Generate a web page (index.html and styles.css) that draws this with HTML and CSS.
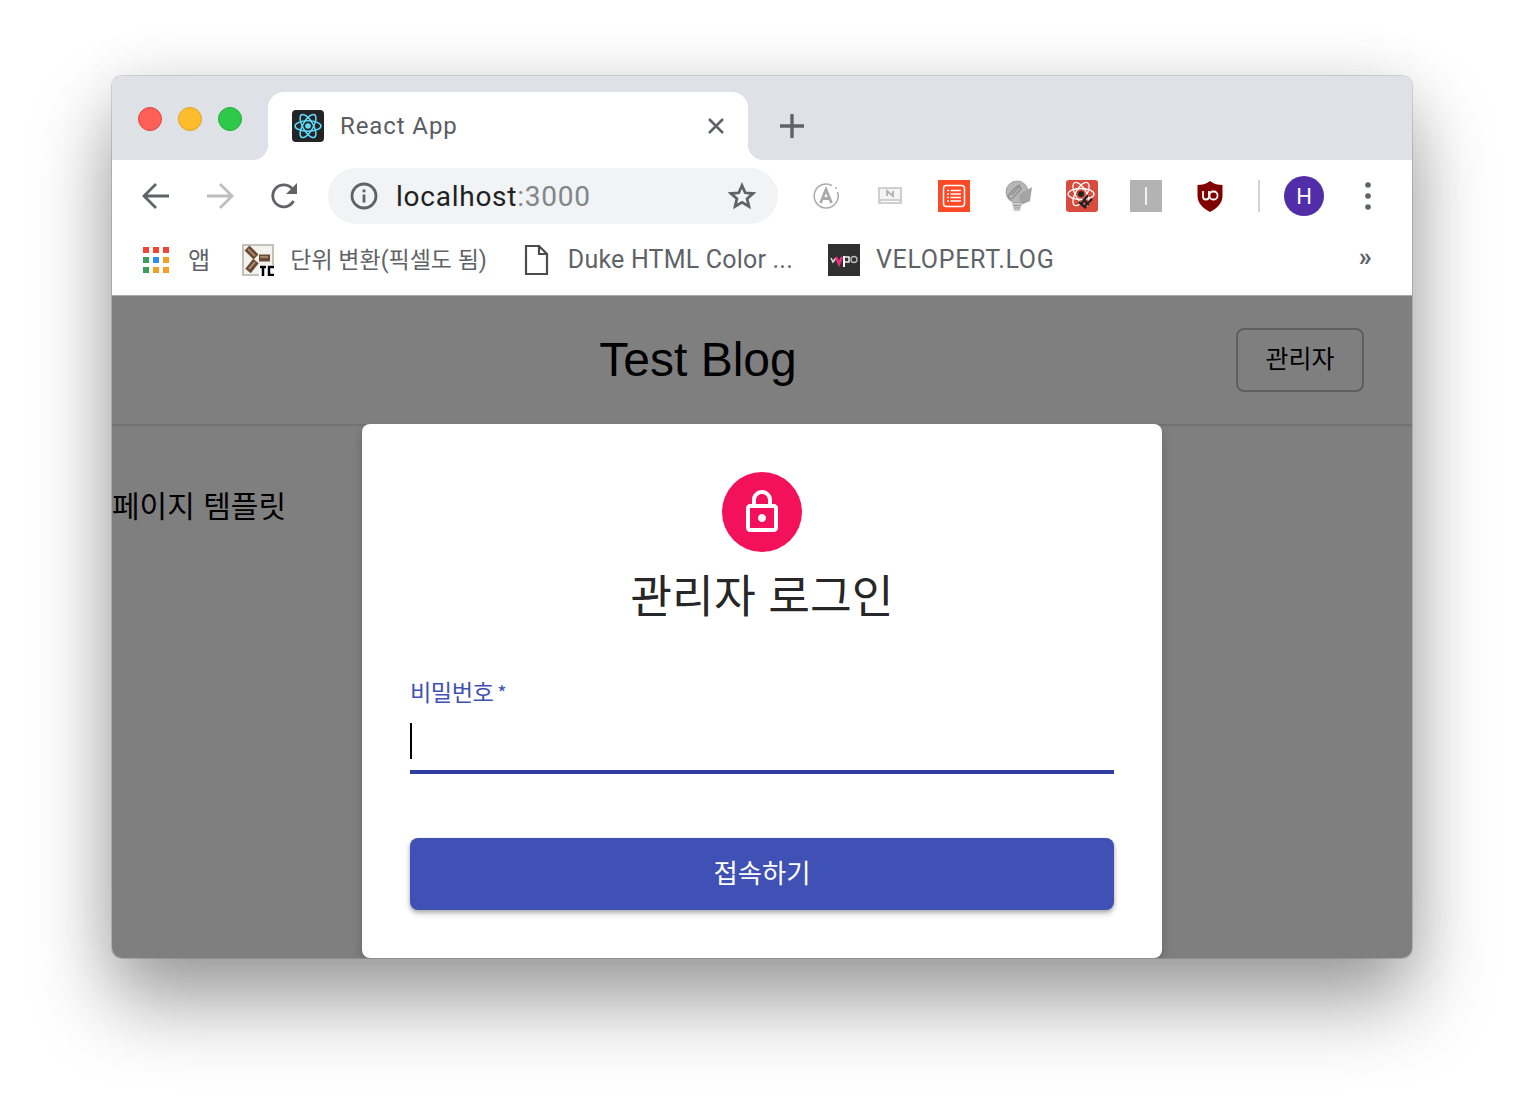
FILE: index.html
```html
<!DOCTYPE html>
<html lang="ko">
<head>
    <meta charset="UTF-8">
    <title>React App</title>
    <link rel="stylesheet" href="styles.css">
</head>
<body>
    <div class="window">
        <div class="tabbar">
            <div class="lights">
                <span class="light red"></span>
                <span class="light yellow"></span>
                <span class="light green"></span>
            </div>
            <div class="tab">
                <svg class="favicon" viewBox="0 0 32 32">
                    <rect width="32" height="32" rx="4" fill="#222426"/>
                    <g fill="none" stroke="#61dafb" stroke-width="1.5">
                        <ellipse cx="16" cy="16" rx="13" ry="5.2"/>
                        <ellipse cx="16" cy="16" rx="13" ry="5.2" transform="rotate(60 16 16)"/>
                        <ellipse cx="16" cy="16" rx="13" ry="5.2" transform="rotate(120 16 16)"/>
                    </g>
                    <circle cx="16" cy="16" r="2.8" fill="#61dafb"/>
                </svg>
                <span class="tab-title">React App</span>
                <svg class="tab-close" viewBox="0 0 16 16">
                    <path d="M1 1 15 15M15 1 1 15" stroke="#5f6368" stroke-width="2.6" fill="none"/>
                </svg>
            </div>
            <svg class="new-tab" viewBox="0 0 26 26">
                <path d="M13 1V25M1 13H25" stroke="#5f6368" stroke-width="3.4" fill="none"/>
            </svg>
        </div>

        <div class="toolbar">
            <svg class="nav-icon" viewBox="0 0 28 28">
                <path d="M27 14H3M14 2 2 14 14 26" stroke="#5f6368" stroke-width="2.8" fill="none"/>
            </svg>
            <svg class="nav-icon" viewBox="0 0 28 28">
                <path d="M1 14H25M14 2 26 14 14 26" stroke="#bdbdbd" stroke-width="2.8" fill="none"/>
            </svg>
            <svg class="nav-icon" viewBox="0 0 28 28">
                <path d="M23.5 19A11 11 0 1 1 22 6.500" stroke="#5f6368" stroke-width="2.800" fill="none"/>
                <path d="M27 1V12H16Z" fill="#5f6368"/>
            </svg>
            <div class="omnibox">
                <svg class="info" viewBox="0 0 28 28">
                    <circle cx="14" cy="14" r="12" stroke="#5f6368" stroke-width="2.800" fill="none"/>
                    <rect x="12.600" y="12.500" width="2.800" height="8" fill="#5f6368"/>
                    <rect x="12.600" y="7.500" width="2.800" height="2.800" fill="#5f6368"/>
                </svg>
                <span class="url">localhost<span class="port">:3000</span></span>
                <svg class="star" viewBox="0 0 28 28">
                    <path d="M14 3.500 17.200 10.800 25 11.500 19.100 16.700 20.900 24.400 14 20.300 7.100 24.400 8.900 16.700 3 11.500 10.800 10.800Z" stroke="#5f6368" stroke-width="2.800" fill="none" stroke-linejoin="miter"/>
                </svg>
            </div>
            <div class="extensions">
                <svg class="ext" viewBox="0 0 32 32">
                    <path d="M22 5.500A12 12 0 1 0 27.500 12" stroke="#aaa" stroke-width="1.500" fill="none"/>
                    <circle cx="26" cy="8" r="1" fill="#aaa"/>
                    <path d="M10.500 23 16 9.500 21.500 23M12.500 18.500H19.500" stroke="#aaa" stroke-width="2.800" fill="none"/>
                </svg>
                <svg class="ext" viewBox="0 0 32 32">
                    <path d="M4 7H28V24H4Z" fill="#cfcfcf"/>
                    <path d="M6 9H26V19H6Z" fill="#f4f4f4"/>
                    <path d="M13 16V11L19 16V11" stroke="#b0b0b0" stroke-width="1.800" fill="none"/>
                    <path d="M7 21.500H25" stroke="#fff" stroke-width="1"/>
                </svg>
                <svg class="ext" viewBox="0 0 32 32">
                    <rect width="32" height="32" fill="#fc4a26"/>
                    <rect x="5.500" y="5.500" width="21" height="21" rx="3" stroke="#fff" stroke-width="1.500" fill="none"/>
                    <path d="M12.500 10.500H23M12.500 14H23M12.500 17.500H23M12.500 21H23M9 10.500H11M9 14H11M9 17.500H11M9 21H11" stroke="#fff" stroke-width="1.400"/>
                </svg>
                <svg class="ext" viewBox="0 0 32 32">
                    <circle cx="15" cy="12" r="11" fill="#b6b6b6" stroke="#a2a2a2"/>
                    <path d="M18 5C13 7 9 12 7 15C5 18 9 20 11 18L18 10C20 8 18 6 16 8L10 15" stroke="#8f8f8f" stroke-width="1.400" fill="none"/>
                    <path d="M30 7 17 15 19 25 28 21Z" fill="#a4a4a4"/>
                    <path d="M10 23H20L18 31H12Z" fill="#c8c8c8"/>
                    <path d="M11 25.500H19M12 28H18" stroke="#999" stroke-width="1"/>
                </svg>
                <svg class="ext" viewBox="0 0 32 32">
                    <rect width="32" height="32" rx="3" fill="#d94c3d"/>
                    <g fill="none" stroke="#fff" stroke-width="1.300">
                        <ellipse cx="15" cy="14" rx="13" ry="5.500"/>
                        <ellipse cx="15" cy="14" rx="13" ry="5.500" transform="rotate(60 15 14)"/>
                        <ellipse cx="15" cy="14" rx="13" ry="5.500" transform="rotate(120 15 14)"/>
                    </g>
                    <circle cx="15" cy="14" r="3" fill="#222"/>
                    <path d="M17 19 23 25M22 15 15 24M26 19 18 27M20 28 13 22" stroke="#222" stroke-width="2.400"/>
                </svg>
                <svg class="ext" viewBox="0 0 32 32">
                    <rect width="32" height="32" rx="1" fill="#b3b3b3"/>
                    <rect x="15" y="7" width="2" height="18" fill="#f2f2f2"/>
                </svg>
                <svg class="ext" viewBox="0 0 32 32">
                    <path d="M16 1C20 4 24 5 28.500 5V16C28.500 23 23 28.500 16 32 9 28.500 3.500 23 3.500 16V5C8 5 12 4 16 1Z" fill="#800000"/>
                    <path d="M9 11V16.500A3 3 0 0 0 15 16.500V11" stroke="#fff" stroke-width="1.800" fill="none"/>
                    <rect x="15.500" y="11.500" width="8" height="8" rx="3.500" stroke="#fff" stroke-width="1.800" fill="none"/>
                </svg>
            </div>
            <span class="divider"></span>
            <span class="avatar">H</span>
            <svg class="menu" viewBox="0 0 6 28">
                <circle cx="3" cy="3" r="2.800" fill="#5f6368"/>
                <circle cx="3" cy="14" r="2.800" fill="#5f6368"/>
                <circle cx="3" cy="25" r="2.800" fill="#5f6368"/>
            </svg>
        </div>

        <div class="bookmarks">
            <div class="bookmark apps">
                <svg class="mark-icon" viewBox="0 0 26 26">
                    <rect x="0" y="0" width="6" height="6" fill="#f44336"/>
                    <rect x="10" y="0" width="6" height="6" fill="#f44336"/>
                    <rect x="20" y="0" width="6" height="6" fill="#f44336"/>
                    <rect x="0" y="10" width="6" height="6" fill="#3c9d5a"/>
                    <rect x="10" y="10" width="6" height="6" fill="#2a8cf5"/>
                    <rect x="20" y="10" width="6" height="6" fill="#f4a024"/>
                    <rect x="0" y="20" width="6" height="6" fill="#3c9d5a"/>
                    <rect x="10" y="20" width="6" height="6" fill="#f4a024"/>
                    <rect x="20" y="20" width="6" height="6" fill="#f4a024"/>
                </svg>
                <span>앱</span>
            </div>
            <div class="bookmark unit">
                <svg class="mark-favicon" viewBox="0 0 32 32">
                    <rect x="1" y="1" width="30" height="30" fill="#f4f2ef" stroke="#c4c0ba" stroke-width="2"/>
                    <path d="M5 4 14 13M28 14H17M6 27 14 17" stroke="#6b4a34" stroke-width="7"/>
                    <path d="M6 5 13 12M26 13H18M7 25 13 18" stroke="#b99a80" stroke-width="1.500"/>
                    <rect x="17" y="21" width="15" height="11" fill="#fff"/>
                    <path d="M18 23H24M21 23V32M32 23H27V31H32" stroke="#000" stroke-width="2.500" fill="none"/>
                </svg>
                <span>단위 변환(픽셀도 됨)</span>
            </div>
            <div class="bookmark duke">
                <svg class="mark-favicon" viewBox="0 0 32 32">
                    <path d="M6 2H19L27 10V30H6Z M19 2V10H27" stroke="#4c4c4c" stroke-width="2.200" fill="#fff"/>
                </svg>
                <span>Duke HTML Color ...</span>
            </div>
            <div class="bookmark velog">
                <svg class="mark-favicon" viewBox="0 0 32 32">
                    <rect width="32" height="32" fill="#303030"/>
                    <path d="M3 14 5 18 8 14" stroke="#ddd" stroke-width="1.600" fill="none"/>
                    <path d="M8 13 11 20 14 13" stroke="#f0307a" stroke-width="2.600" fill="none"/>
                    <path d="M16 12V23" stroke="#fff" stroke-width="2"/>
                    <rect x="16" y="13" width="5" height="5" stroke="#fff" stroke-width="1.400" fill="none"/>
                    <circle cx="26" cy="15.500" r="3" stroke="#bbb" stroke-width="1.400" fill="none"/>
                </svg>
                <span>VELOPERT.LOG</span>
            </div>
            <span class="more">»</span>
        </div>

        <div class="page">
            <header class="header">
                <h1 class="blog-title">Test Blog</h1>
                <button class="admin-button">관리자</button>
            </header>
            <div class="sidebar">페이지 템플릿</div>

            <div class="backdrop"></div>
            <div class="modal">
                <div class="lock">
                    <svg viewBox="0 0 24 24">
                        <path fill="#fff" d="M18 8h-1V6c0-2.760-2.240-5-5-5S7 3.240 7 6v2H6c-1.100 0-2 .9-2 2v10c0 1.100.9 2 2 2h12c1.100 0 2-.9 2-2V10c0-1.100-.9-2-2-2zM9 6c0-1.660 1.340-3 3-3s3 1.340 3 3v2H9V6zm9 14H6V10h12v10zm-6-3c1.100 0 2-.9 2-2s-.9-2-2-2-2 .9-2 2 .9 2 2 2z"/>
                    </svg>
                </div>
                <h2 class="modal-title">관리자 로그인</h2>
                <form class="login-form">
                    <label class="field-label">비밀번호<span class="required">*</span></label>
                    <div class="field-input"><span class="caret"></span></div>
                    <button type="button" class="submit">접속하기</button>
                </form>
            </div>
        </div>
    </div>
</body>
</html>
```

FILE: styles.css
```css
html, body {
    margin: 0;
    height: 100%;
}
body {
    background: #ffffff;
    padding: 76px 112px 0;
    box-sizing: border-box;
    overflow: hidden;
    font-family: 'Roboto', 'Noto Sans CJK KR', sans-serif;
}
.window {
    width: 1300px;
    height: 882px;
    border-radius: 10px;
    display: flex;
    flex-direction: column;
    overflow: hidden;
    background: #fff;
    box-shadow: 0 0 0 1px rgba(0, 0, 0, 0.14), 0 44px 80px rgba(0, 0, 0, 0.38), 0 0 60px rgba(0, 0, 0, 0.08);
}

.tabbar {
    height: 84px;
    flex: none;
    background: #dee1e6;
    display: flex;
    align-items: flex-end;
}
.lights {
    display: flex;
    gap: 16px;
    align-self: flex-start;
    margin: 31px 26px 0 26px;
}
.light {
    width: 24px;
    height: 24px;
    border-radius: 50%;
    box-sizing: border-box;
}
.red { background: #ff5f57; border: 1px solid #e2463f; }
.yellow { background: #ffbd2e; border: 1px solid #e1a029; }
.green { background: #2fc94a; border: 1px solid #2aac3d; }
.tab {
    width: 480px;
    height: 68px;
    background: #fff;
    border-radius: 16px 16px 0 0;
    display: flex;
    align-items: center;
    padding: 0 24px 0 24px;
    box-sizing: border-box;
    position: relative;
}
.tab::before, .tab::after {
    content: "";
    position: absolute;
    bottom: 0;
    width: 16px;
    height: 16px;
}
.tab::before {
    left: -16px;
    background: radial-gradient(circle at 0 0, #dee1e6 16px, #fff 16.500px);
}
.tab::after {
    right: -16px;
    background: radial-gradient(circle at 100% 0, #dee1e6 16px, #fff 16.500px);
}
.favicon {
    width: 32px;
    height: 32px;
    flex: none;
}
.tab-title {
    flex: 1;
    margin-left: 16px;
    font-size: 24px;
    letter-spacing: 0.9px;
    color: #5a5d61;
}
.tab-close {
    width: 16px;
    height: 16px;
    flex: none;
}
.new-tab {
    width: 26px;
    height: 26px;
    align-self: center;
    margin: 16px 0 0 31px;
}

.toolbar {
    height: 72px;
    flex: none;
    display: flex;
    align-items: center;
    padding-left: 30px;
}
.nav-icon {
    width: 28px;
    height: 28px;
    margin-right: 36px;
    flex: none;
}
.omnibox {
    width: 450px;
    height: 56px;
    margin-left: -6px;
    border-radius: 28px;
    background: #f1f3f4;
    display: flex;
    align-items: center;
    padding: 0 22px;
    box-sizing: border-box;
    flex: none;
}
.info {
    width: 28px;
    height: 28px;
    flex: none;
}
.url {
    flex: 1;
    margin-left: 18px;
    font-size: 28px;
    letter-spacing: 0.75px;
    color: #202124;
}
.port {
    color: #80868b;
}
.star {
    width: 28px;
    height: 28px;
    flex: none;
}
.extensions {
    display: flex;
    gap: 32px;
    margin-left: 32px;
}
.ext {
    width: 32px;
    height: 32px;
    flex: none;
}
.divider {
    width: 2px;
    height: 32px;
    background: #d2d3d5;
    margin-left: 32px;
}
.avatar {
    width: 40px;
    height: 40px;
    margin-left: 24px;
    border-radius: 50%;
    background: #512da8;
    color: #fff;
    font-size: 22px;
    display: flex;
    align-items: center;
    justify-content: center;
}
.menu {
    width: 6px;
    height: 28px;
    margin-left: 41px;
}

.bookmarks {
    height: 55px;
    padding: 0 0 8px 31px;
    flex: none;
    display: flex;
    align-items: center;
    border-bottom: 1px solid #a9a9a9;
    font-size: 25px;
    letter-spacing: 0.2px;
    color: #5f6368;
    position: relative;
}
.bookmark {
    display: flex;
    align-items: center;
}
.mark-icon {
    width: 26px;
    height: 26px;
    margin-right: 19px;
}
.mark-favicon {
    width: 32px;
    height: 32px;
    margin-right: 16px;
}
.apps { margin-right: 32px; font-size: 24px; }
.apps span { margin-bottom: 2px; }
.unit { margin-right: 33px; font-size: 23px; letter-spacing: 0; }
.unit span { margin-bottom: 4px; }
.duke { margin-right: 35px; }
.velog { letter-spacing: 0.7px; }
.more {
    margin-left: auto;
    margin-right: 40px;
    font-size: 26px;
    font-weight: 700;
    line-height: 1;
    padding-bottom: 6px;
}

.page {
    flex: 1;
    position: relative;
    overflow: hidden;
}
.header {
    height: 128px;
    border-bottom: 2px solid #e4e4e4;
    display: flex;
    align-items: center;
    justify-content: center;
    position: relative;
    padding-right: 128px;
}
.blog-title {
    margin: 0 0 2px;
    font-family: 'Liberation Sans', sans-serif;
    font-weight: 400;
    font-size: 48px;
    color: #000;
}
.admin-button {
    position: absolute;
    right: 48px;
    top: 32px;
    width: 128px;
    height: 64px;
    box-sizing: border-box;
    background: #fff;
    border: 2px solid #bdbdbd;
    border-radius: 8px;
    padding: 0 0 6px;
    font-family: 'Noto Sans CJK KR', sans-serif;
    font-size: 25px;
    color: #000;
}
.sidebar {
    margin-top: 56px;
    font-family: 'Noto Sans CJK KR', sans-serif;
    font-size: 30px;
    line-height: 44px;
    color: #000;
}
.backdrop {
    position: absolute;
    inset: 0;
    background: rgba(0, 0, 0, 0.5);
}
.modal {
    position: absolute;
    left: 250px;
    top: 128px;
    width: 800px;
    height: 534px;
    background: #fff;
    border-radius: 8px;
    padding: 48px;
    box-sizing: border-box;
    display: flex;
    flex-direction: column;
    align-items: center;
    box-shadow: 0 6px 12px rgba(0, 0, 0, 0.2);
}
.lock {
    width: 80px;
    height: 80px;
    border-radius: 50%;
    background: #f4115b;
    display: flex;
    align-items: center;
    justify-content: center;
    flex: none;
}
.lock svg {
    width: 48px;
    height: 48px;
}
.modal-title {
    margin: 11px 0 0;
    font-family: 'Noto Sans CJK KR', sans-serif;
    font-weight: 400;
    font-size: 45.4px;
    line-height: 60px;
    color: rgba(0, 0, 0, 0.87);
}
.login-form {
    width: 100%;
    display: flex;
    flex-direction: column;
    margin-top: 53px;
}
.field-label {
    font-family: 'Noto Sans CJK KR', sans-serif;
    font-size: 23.2px;
    line-height: 30px;
    letter-spacing: -0.5px;
    color: #3f51b5;
}
.required {
    margin-left: 4px;
    font-size: 20px;
}
.field-input {
    height: 58px;
    padding-top: 4px;
    border-bottom: 4px solid #303f9f;
    display: flex;
    align-items: center;
}
.caret {
    width: 2px;
    height: 36px;
    background: #000;
}
.submit {
    margin-top: 64px;
    height: 72px;
    border: none;
    border-radius: 8px;
    padding: 0 0 5px;
    background: #3f51b5;
    color: #fff;
    font-family: 'Noto Sans CJK KR', sans-serif;
    font-size: 26.4px;
    box-shadow: 0 2px 4px rgba(0, 0, 0, 0.25), 0 4px 6px rgba(0, 0, 0, 0.14);
}
```
